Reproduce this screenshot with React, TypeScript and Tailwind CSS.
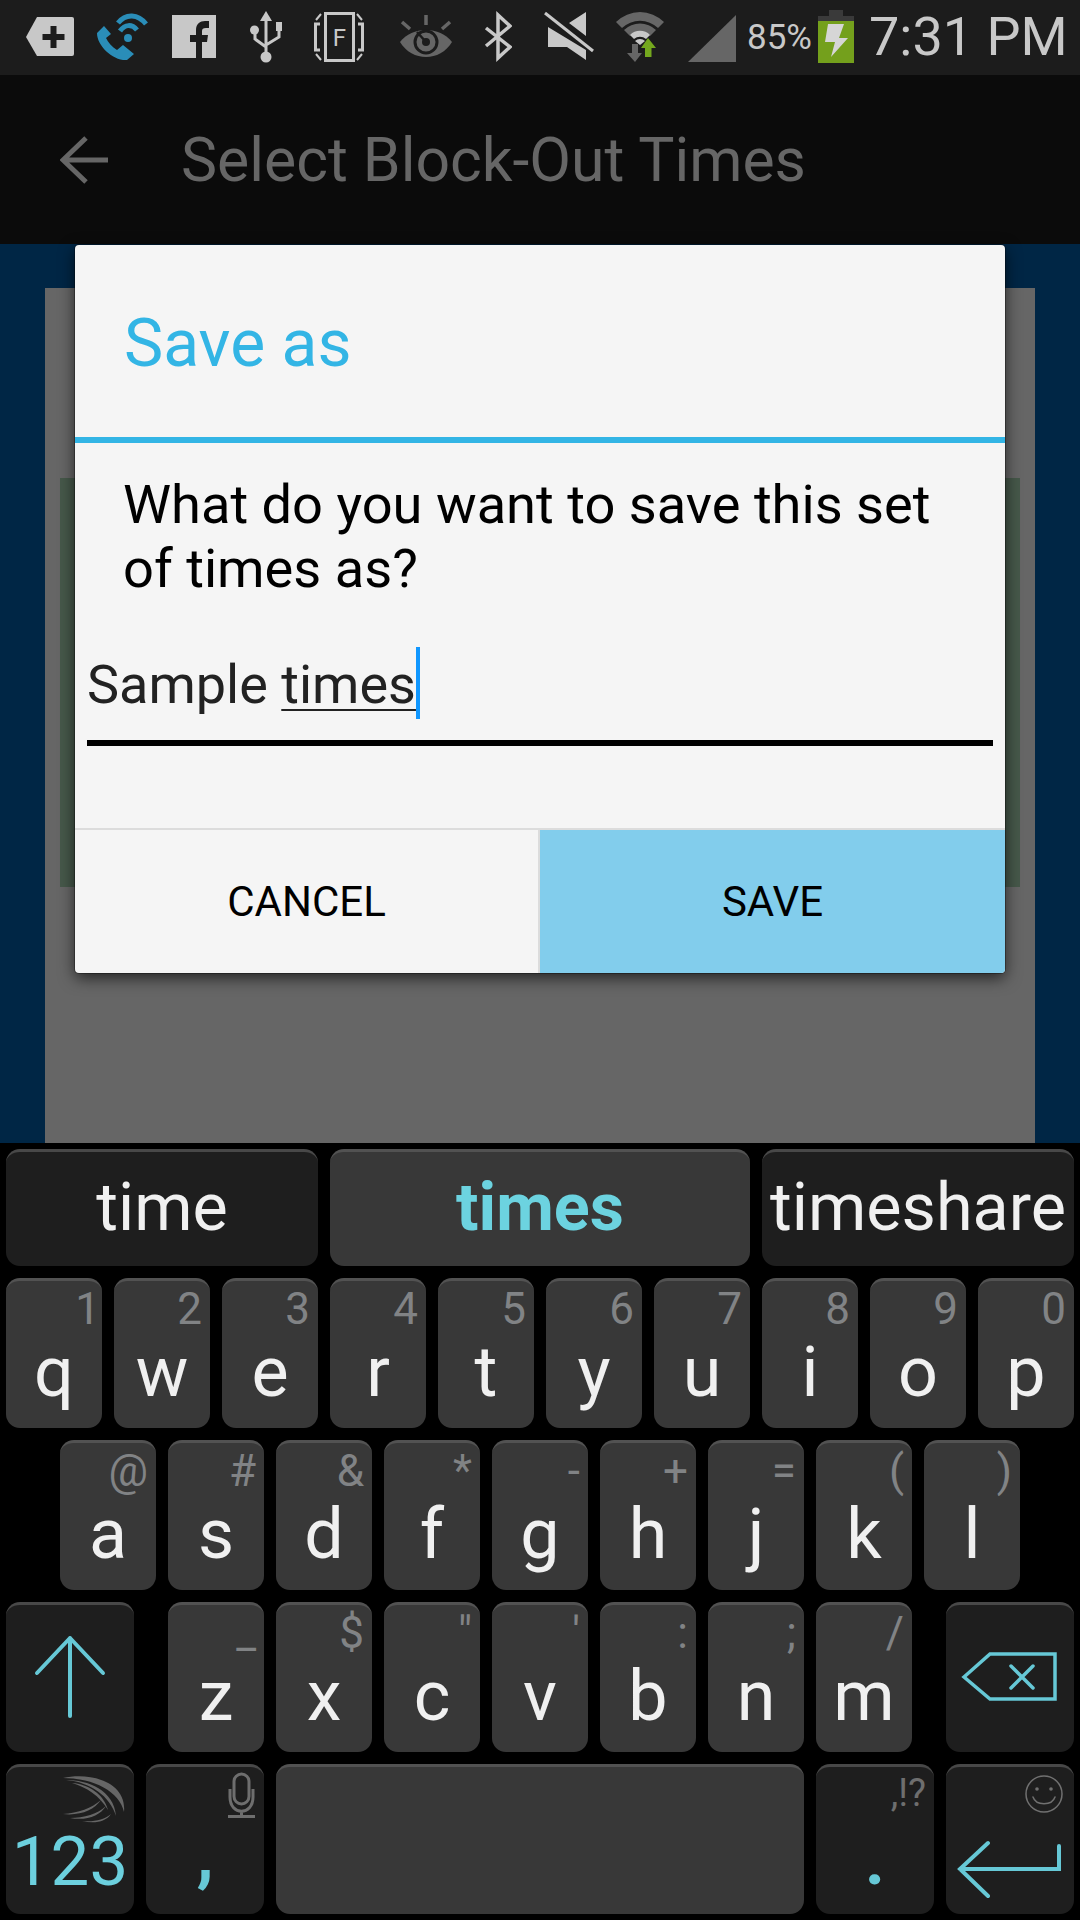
import type { ReactNode } from 'react';

const CYAN = '#66c8d6';
const ICON = '#c8c8c8';
const DIM = '#666666';

// each status icon is drawn in screen coordinates, so the paths read like the measurements
function StatusIcon({ x, w, className, children }: { x: number; w: number; className?: string; children: ReactNode }) {
  return (
    <svg className={className} width={w} height={75} viewBox={`${x} 0 ${w} 75`} fill="none">
      {children}
    </svg>
  );
}

function StatusBar() {
  return (
    <div className="flex h-[75px] shrink-0 items-start bg-[#1c1c1c] pl-[26px]">
      <StatusIcon x={26} w={48}>
        <path d="M26 37 L37 17 H72 Q74 17 74 19 V54 Q74 56 72 56 H37 Z" fill={ICON} />
        <path d="M50.5 26 H56.5 V34 H64.5 V40 H56.5 V48 H50.5 V40 H42.5 V34 H50.5 Z" fill="#1c1c1c" />
      </StatusIcon>
      <StatusIcon x={96} w={52} className="ml-[22px]">
        <path d="M104 26 L97 33 C97 46 113 61 127 60 L134 54 L123 45 L117 50 C112 47 108 42 106 38 L111 34 Z" fill="#2a8db8" />
        <path d="M118 23 C126 13 138 14 146 24" stroke="#2a8db8" strokeWidth="5" />
        <path d="M120 31 C125 24 132 24 137 30" stroke="#2a8db8" strokeWidth="5" />
        <circle cx="128" cy="38" r="4" fill="#2a8db8" />
      </StatusIcon>
      <StatusIcon x={172} w={44} className="ml-[24px]">
        <rect x="172" y="15" width="44" height="43" fill={ICON} />
        <path d="M196 58 V42 H190 V35 H196 V30 C196 24 200 21 205 21 H209 V28 H206 C203 28 202 29 202 31 V35 H208 L207 42 H202 V58 Z" fill="#1c1c1c" />
      </StatusIcon>
      <StatusIcon x={250} w={32} className="ml-[34px]">
        <path d="M266 11 L272 21 H260 Z" fill={ICON} />
        <path d="M266 20 V55 M255 30 V39 L266 47 M279 30 V37 L266 45" stroke={ICON} strokeWidth="3" />
        <circle cx="266" cy="57" r="5.5" fill={ICON} />
        <circle cx="254.5" cy="30" r="4.5" fill={ICON} />
        <rect x="276" y="22" width="6" height="9" fill={ICON} />
      </StatusIcon>
      <StatusIcon x={314} w={50} className="ml-[32px]">
        <rect x="325.5" y="13.5" width="28" height="47" stroke={ICON} strokeWidth="3" />
        <text x="339.5" y="46" textAnchor="middle" fontFamily="Roboto" fontSize="24" fill={ICON}>F</text>
        <path d="M320 24 H315.5 V50 H320 M358 24 H362.5 V50 H358" stroke={ICON} strokeWidth="3" />
        <path d="M316 20 L321 14 M316 54 L321 60 M362 20 L357 14 M362 54 L357 60" stroke={ICON} strokeWidth="2" />
      </StatusIcon>
      <StatusIcon x={400} w={52} className="ml-[36px]">
        <path d="M400 42 C412 26 440 26 452 42 C440 62 412 62 400 42 Z" fill={DIM} />
        <circle cx="426" cy="42" r="11" stroke="#1c1c1c" strokeWidth="3" />
        <path d="M426 42 L417 32" stroke="#1c1c1c" strokeWidth="2.5" />
        <circle cx="426" cy="42" r="4" fill="#1c1c1c" />
        <path d="M426 15 V25 M402 22 L410 29 M450 22 L442 29" stroke={DIM} strokeWidth="3.5" />
      </StatusIcon>
      <StatusIcon x={484} w={28} className="ml-[32px]">
        <path d="M486 28 L510 47 L498 58 V15 L510 26 L486 46" stroke={ICON} strokeWidth="3.5" />
      </StatusIcon>
      <StatusIcon x={544} w={50} className="ml-[32px]">
        <path d="M545 13 L593 51" stroke={ICON} strokeWidth="3" />
        <path d="M569 23 L586 12 V36 Z M548 27 L586 50 V60 L567 47 H548 Z" fill={ICON} />
      </StatusIcon>
      <StatusIcon x={614} w={52} className="ml-[20px]">
        <path d="M616 22 A34 34 0 0 1 664 22 L658 28 A26 26 0 0 0 622 28 Z" fill={DIM} />
        <path d="M624 30 A23 23 0 0 1 656 30 L650 36 A14 14 0 0 0 630 36 Z" fill={DIM} />
        <path d="M630 35 A14 14 0 0 1 650 35 L646 39 A9 9 0 0 0 634 39 Z" fill={ICON} />
        <path d="M635 41 A7 7 0 0 1 645 41 L640 45 Z" fill={ICON} />
        <path d="M632 44 H638 V53 H642 L635 62 L627 53 H632 Z" fill={DIM} />
        <path d="M648 38 L656 48 H651.5 V57 H645 V48 H641 Z" fill="#74a81e" />
      </StatusIcon>
      <StatusIcon x={688} w={48} className="ml-[22px]">
        <path d="M688 62 L736 15 V62 Z" fill={DIM} />
      </StatusIcon>
      <span className="ml-[11px] w-[65px] pt-[17px] text-[35px] leading-[41px] text-[#c8c8c8]">85%</span>
      <StatusIcon x={818} w={36} className="ml-[6px]">
        <rect x="829" y="10" width="14" height="7" fill="#3a3a3a" />
        <rect x="818" y="16" width="36" height="5" fill="#3a3a3a" />
        <rect x="818" y="21" width="36" height="42" fill="#74a01c" />
        <path d="M828 24 H844 L839 38 H848 L831 57 L835 42 H825 Z" fill="#d6d6d6" />
      </StatusIcon>
      <span className="ml-[15px] pt-[6px] text-[54px] leading-[62px] text-[#c8c8c8]">7:31 PM</span>
    </div>
  );
}

function ActionBar() {
  return (
    <div className="flex h-[169px] shrink-0 items-center bg-[#0b0b0b] pl-[60px]">
      <svg width="48" height="48" viewBox="0 0 48 48" fill="none" stroke="#666666" strokeWidth="5">
        <path d="M48 24 H3 M26 2 L3 24 L26 46" />
      </svg>
      <span className="ml-[73px] pt-[2px] text-[60.7px] text-[#666666]">Select Block-Out Times</span>
    </div>
  );
}

function Dialog() {
  return (
    <div className="absolute left-[75px] top-[1px] flex h-[728px] w-[930px] flex-col rounded-[4px] bg-[#f5f5f5] shadow-[0_0_0_1px_rgba(0,0,0,0.3),0_5px_16px_rgba(0,0,0,0.65)]">
      <div className="flex h-[192px] items-center pl-[49px] pt-[4px] text-[66px] text-[#33b5e5]">Save as</div>
      <div className="h-[6px] bg-[#33b5e5]" />
      <div className="pl-[48px] pr-[40px] pt-[30px] text-[54.2px] leading-[64px] text-black">
        What do you want to save this set of times as?
      </div>
      <div className="mx-[12px] mt-[53px] h-[92px] border-b-[6px] border-black pt-[1px] text-[54px] leading-[60px] text-[#222222]">
        <span>Sample </span>
        <span className="relative underline decoration-2 underline-offset-[6px]">
          times
          <span className="absolute right-[-4px] top-[-6px] h-[72px] w-[4px] bg-[#1097ff]" />
        </span>
      </div>
      <div className="mt-[82px] flex flex-1 border-t-2 border-[#dcdcdc] text-[42px] text-black">
        <div className="flex w-[465px] items-center justify-center border-r-2 border-[#dcdcdc]">CANCEL</div>
        <div className="flex flex-1 items-center justify-center rounded-br-[4px] bg-[#82cdec]">SAVE</div>
      </div>
    </div>
  );
}

function Key({
  children,
  hint,
  dark,
  className = 'w-[96px]',
  labelClass = 'pb-[21px] text-[70px] text-[#f0f0f0]',
}: {
  children?: ReactNode;
  hint?: string;
  dark?: boolean;
  className?: string;
  labelClass?: string;
}) {
  return (
    <div
      className={`relative flex h-[150px] items-end justify-center rounded-[14px] border-t-[3px] leading-[70px] ${
        dark ? 'border-[#484848] bg-[#1e1e1e]' : 'border-[#525252] bg-[#383838]'
      } ${className} ${labelClass}`}
    >
      {children}
      {hint && (
        <span className={`absolute top-[6px] text-[44px] leading-[44px] text-[#818385] ${hint === '1' ? 'right-[2px]' : 'right-[8px]'}`}>
          {hint}
        </span>
      )}
    </div>
  );
}

function Suggestion({ children, active, className }: { children: ReactNode; active?: boolean; className: string }) {
  return (
    <div
      className={`flex h-[117px] items-end justify-center rounded-[14px] border-t-[3px] pb-[26px] text-[66.5px] leading-[66px] ${
        active ? 'border-[#525252] bg-[#383838] font-bold text-[#6cd3e0]' : 'border-[#484848] bg-[#1e1e1e] text-[#f0f0f0]'
      } ${className}`}
    >
      {children}
    </div>
  );
}

const ROW_1 = [['q', '1'], ['w', '2'], ['e', '3'], ['r', '4'], ['t', '5'], ['y', '6'], ['u', '7'], ['i', '8'], ['o', '9'], ['p', '0']];
const ROW_2 = [['a', '@'], ['s', '#'], ['d', '&'], ['f', '*'], ['g', '-'], ['h', '+'], ['j', '='], ['k', '('], ['l', ')']];
const ROW_3 = [['z', '_'], ['x', '$'], ['c', '"'], ['v', "'"], ['b', ':'], ['n', ';'], ['m', '/']];

function Keyboard() {
  return (
    <div className="flex h-[777px] shrink-0 flex-col gap-[12px] bg-black pl-[6px] pt-[6px]">
      <div className="flex gap-[12px]">
        <Suggestion className="w-[312px]">time</Suggestion>
        <Suggestion active className="w-[420px]">times</Suggestion>
        <Suggestion className="w-[312px]">timeshare</Suggestion>
      </div>
      <div className="flex gap-[12px]">
        {ROW_1.map(([c, h]) => <Key key={c} hint={h}>{c}</Key>)}
      </div>
      <div className="flex gap-[12px] pl-[54px]">
        {ROW_2.map(([c, h]) => <Key key={c} hint={h}>{c}</Key>)}
      </div>
      <div className="flex">
        <Key dark className="w-[128px]">
          <svg className="absolute left-0 top-[-3px]" width="128" height="150" viewBox="0 0 128 150" fill="none" stroke={CYAN} strokeWidth="4" strokeLinecap="round" strokeLinejoin="round">
            <path d="M64 114 V36 M31 71 L64 36 L97 71" />
          </svg>
        </Key>
        <div className="ml-[34px] flex gap-[12px]">
          {ROW_3.map(([c, h]) => <Key key={c} hint={h}>{c}</Key>)}
        </div>
        <Key dark className="ml-[34px] w-[128px]">
          <svg className="absolute left-0 top-[-3px]" width="128" height="150" viewBox="0 0 128 150" fill="none" stroke={CYAN} strokeWidth="3.5" strokeLinecap="round">
            <path d="M18 75 L44 52 H109 V97 H44 Z M65 64 L87 86 M87 64 L65 86" />
          </svg>
        </Key>
      </div>
      <div className="flex gap-[12px]">
        <Key dark className="w-[128px]" labelClass="pb-[17px] text-[69px] text-[#6cd0de]">
          <svg className="absolute left-0 top-[-3px]" width="128" height="60" viewBox="0 0 128 60" fill="#666666">
            <path d="M57 14 C85 8 121 18 118 48 C114 28 88 14 57 14 Z" />
            <path d="M60 16 C82 16 108 26 110 52 C104 32 84 18 60 16 Z" />
            <path d="M66 19 C82 20 98 30 102 46 C94 32 80 23 66 19 Z" />
            <path d="M57 50 C72 49 86 44 95 36 C88 46 74 52 57 50 Z" />
            <path d="M64 54 C78 54 92 50 100 42 C94 52 80 57 64 54 Z" />
            <path d="M76 57 C88 58 98 56 105 50 C100 58 88 60 76 57 Z" />
          </svg>
          123
        </Key>
        <Key dark className="w-[118px]" labelClass="pb-[25px] text-[70px] font-bold text-[#66c8d6]">
          <svg className="absolute left-0 top-[-3px]" width="118" height="60" viewBox="0 0 118 60" fill="none" stroke="#6e6e6e" strokeWidth="3">
            <rect x="88" y="10" width="15" height="30" rx="7.5" />
            <path d="M84 25 V33 C84 52 107 52 107 33 V25 M95.5 46 V52 M82 52.5 H109" />
          </svg>
          ,
        </Key>
        <Key className="w-[528px]" />
        <Key dark className="w-[118px]" labelClass="pb-[19px] text-[70px] font-bold text-[#66c8d6]">
          .
          <span className="absolute right-[8px] top-[4px] text-[38px] font-normal leading-[44px] text-[#6e6e6e]">,!?</span>
        </Key>
        <Key dark className="w-[128px]">
          <svg className="absolute left-0 top-[-3px]" width="128" height="150" viewBox="0 0 128 150" fill="none" strokeLinecap="round">
            <path d="M42 79 L14 105 L42 132 M14 105 H113 V82" stroke={CYAN} strokeWidth="4" />
            <circle cx="98" cy="30" r="18" stroke="#707070" strokeWidth="1.5" />
            <circle cx="91" cy="25" r="1.8" fill="#707070" />
            <circle cx="105" cy="25" r="1.8" fill="#707070" />
            <path d="M87 33 C90 42 106 42 109 33" stroke="#707070" strokeWidth="1.5" />
          </svg>
        </Key>
      </div>
    </div>
  );
}

export default function App() {
  return (
    <div className="flex h-[1920px] w-[1080px] flex-col overflow-hidden bg-black font-['Roboto',sans-serif]">
      <StatusBar />
      <ActionBar />
      <div className="relative flex-1 bg-[#002645] px-[45px] pt-[44px]">
        <div className="h-full bg-[#666666] px-[15px] pt-[190px]">
          <div className="h-[409px] bg-[#46584a]" />
        </div>
        <Dialog />
      </div>
      <Keyboard />
    </div>
  );
}
